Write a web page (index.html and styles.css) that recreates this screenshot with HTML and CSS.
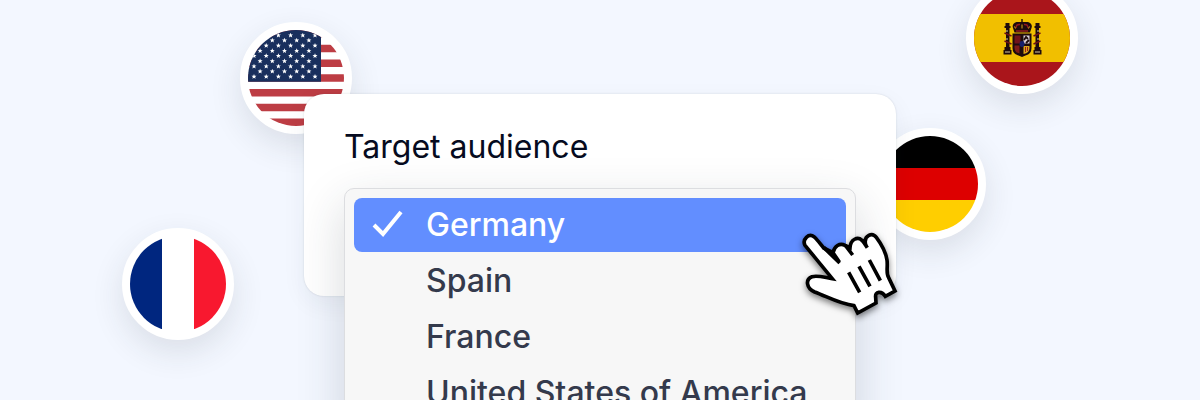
FILE: index.html
```
<!DOCTYPE html>
<html lang="en">
	<head>
		<meta charset="utf-8">
		<meta name="viewport" content="width=device-width, initial-scale=1.0">
		<title>Target audience</title>
		<link rel="stylesheet" href="styles.css">
	</head>
	<body>
		<main class="stage">
			<svg class="flag flag-us" viewBox="0 0 96 96" role="img" aria-label="United States of America">
				<defs>
					<path id="star" fill="#fff" d="M0-2.500 .7-.8 2.500-.7 1.100 .4 1.600 2.200 0 1.200-1.600 2.200-1.100 .4-2.500-.7-.7-.8Z"/>
					<g id="star-row">
						<use href="#star" x="6"/>
						<use href="#star" x="18.2"/>
						<use href="#star" x="30.4"/>
						<use href="#star" x="42.600"/>
						<use href="#star" x="54.800"/>
						<use href="#star" x="67"/>
					</g>
					<g id="star-row-short">
						<use href="#star" x="12.100"/>
						<use href="#star" x="24.300"/>
						<use href="#star" x="36.500"/>
						<use href="#star" x="48.700"/>
						<use href="#star" x="60.900"/>
					</g>
				</defs>
				<path fill="#fff" d="M0 0h96v96H0z"/>
				<path stroke="#bd3d44" stroke-width="7.4" d="M0 3.7h96M0 18.5h96M0 33.2h96M0 48h96M0 62.8h96M0 77.5h96M0 92.3h96"/>
				<path fill="#192f5d" d="M0 0h73v51.7H0z"/>
				<use href="#star-row" y="5.200"/>
				<use href="#star-row-short" y="10.300"/>
				<use href="#star-row" y="15.500"/>
				<use href="#star-row-short" y="20.700"/>
				<use href="#star-row" y="25.800"/>
				<use href="#star-row-short" y="31"/>
				<use href="#star-row" y="36.200"/>
				<use href="#star-row-short" y="41.300"/>
				<use href="#star-row" y="46.500"/>
			</svg>
			<svg class="flag flag-es" viewBox="0 0 96 96" role="img" aria-label="Spain">
				<path fill="#aa151b" d="M0 0h96v96H0z"/>
				<path fill="#f1bf00" d="M0 24h96v48H0z"/>
				<!-- pillars -->
				<path fill="#1d0b0c" d="M31.500 33h4v3h-4zM30.500 36h6v2h-6zM32 38h3.500v21H32zM30.500 57h6v3h-6zM29.500 60h8v4.500h-8zM61.500 33h4v3h-4zM60.500 36h6v2h-6zM61.500 38H65v21h-3.500zM60.500 57h6v3h-6zM59.500 60h8v4.500h-8z"/>
				<path fill="none" stroke="#6d1216" stroke-width="1.6" d="M30.500 43l7 3M30.500 51l7 3M66.500 43l-7 3M66.500 51l-7 3"/>
				<path stroke="#d9c9a0" d="M33 40v2M33 48v2M64 40v2M64 48v2M31 62h5M61 62h5"/>
				<!-- crown -->
				<path fill="#1d0b0c" d="M47.300 29h1.400v3l5.300 0q5 2 3.500 6l-1.500 4.500H40.500L39 38q-1.500-4 3.500-6l4.800 0z"/>
				<path fill="none" stroke="#8e1a1e" stroke-width="1.500" d="M42 38q0-4 4-3.500M54 38q0-4-4-3.500M42 41h12"/>
				<path fill="none" stroke="#d8a818" d="M40.500 36.500l1 2M55.500 36.500l-1 2M48 34.500v4"/>
				<!-- shield -->
				<path fill="#1d0b0c" d="M38.500 43.500h19V58q0 6-6 7.500L48 67l-3.500-1.500q-6-1.500-6-7.500z"/>
				<path fill="#6e121a" d="M40.500 45.500h6v8h-6z"/>
				<path fill="#d8cfda" d="M49.500 45.500h6v8h-6z"/>
				<path fill="none" stroke="#1d0b0c" stroke-width="1.800" d="M50 50l2-3 2 2M52 53l3-3"/>
				<path fill="#7c1a18" d="M40.500 55.500h5v8q-5-1-5-6z"/>
				<path fill="#dca51b" d="M49.500 56h6v2q0 5-6 6z"/>
				<path fill="none" stroke="#9a1f1d" d="M51.500 57v5M53.500 57v4"/>
				<ellipse cx="48" cy="54" rx="2.500" ry="3" fill="#17206b"/>
			</svg>
			<svg class="flag flag-de" viewBox="0 0 96 96" role="img" aria-label="Germany">
				<path d="M0 0h96v32H0z"/>
				<path fill="#d00" d="M0 32h96v32H0z"/>
				<path fill="#ffce00" d="M0 64h96v32H0z"/>
			</svg>
			<svg class="flag flag-fr" viewBox="0 0 96 96" role="img" aria-label="France">
				<path fill="#00267f" d="M0 0h32v96H0z"/>
				<path fill="#fff" d="M32 0h32v96H32z"/>
				<path fill="#f8182f" d="M64 0h32v96H64z"/>
			</svg>

			<form class="card">
				<label class="title" for="audience">Target audience</label>
				<div class="field">
					<select class="menu" id="audience" name="audience" size="4">
						<option selected>Germany</option>
						<option>Spain</option>
						<option>France</option>
						<option>United States of America</option>
					</select>
					<svg class="check" viewBox="0 0 32 28" aria-hidden="true">
						<path d="M2 15l9 9L29 2"/>
					</svg>
					<svg class="hand" viewBox="0 0 360 330" aria-hidden="true">
						<path class="hand-shape" d="M45 76C36 58 56 38 73 51C83 60 92 73 101 84L129 98C133 78 149 68 165 76Q171 79 180 83C182 57 203 49 216 61L226 69C223 47 246 35 259 52Q286 88 291 120C294 142 287 158 296 173L315 213L286 229C275 211 254 214 257 232L258 249L203 279L192 257C150 252 112 230 74 216C49 205 45 178 66 170C84 165 106 173 127 176Z"/>
						<path class="hand-lines" d="M101 82L149 129M129 98L148 126M165 75L188 105M216 59L232 83M176 157L209 217M207 139L240 199M238 120L271 182"/>
					</svg>
				</div>
			</form>
		</main>
	</body>
</html>
```
FILE: styles.css
```
body {
	margin: 0;
	background: #f3f7ff;
	font-family: Inter, sans-serif;
	font-size: 32px;
	line-height: 40px;
}

.stage {
	position: relative;
	display: flex;
	justify-content: center;
	align-items: flex-start;
	height: 100vh;
	padding-top: 94px;
	box-sizing: border-box;
	overflow: hidden;
}

/* flags float around the card */
.flag {
	position: absolute;
	width: 96px;
	height: 96px;
	border: 8px solid #fff;
	border-radius: 50%;
	background: #fff;
	box-shadow: 0 12px 32px rgba(40, 50, 60, 0.12);
}

.flag-us {
	top: 22px;
	left: calc(50% - 360px);
}

.flag-es {
	top: -18px;
	left: calc(50% + 366px);
}

.flag-de {
	top: 128px;
	left: calc(50% + 274px);
}

.flag-fr {
	top: 228px;
	left: calc(50% - 478px);
}

.card {
	position: relative;
	width: 100%;
	max-width: 592px;
	padding: 33px 40px 28px;
	box-sizing: border-box;
	border-radius: 20px;
	background: #fff;
	box-shadow: 0 0 2px rgba(40, 50, 60, 0.16), 0 8px 24px rgba(40, 50, 60, 0.06);
}

.title {
	display: block;
	margin-bottom: 21px;
	color: #060b20;
}

.field {
	position: relative;
	height: 80px;
}

/* the open list hangs out of the card */
.menu {
	position: absolute;
	top: 0;
	left: 0;
	width: 100%;
	height: 248px;
	padding: 9px;
	box-sizing: border-box;
	overflow: hidden;
	border: 1px solid #dcdde0;
	border-radius: 10px;
	outline: none;
	background: #f7f7f7;
	color: #343a4c;
	font: inherit;
	box-shadow: 0 16px 48px rgba(40, 50, 60, 0.18);
}

.menu option {
	height: 54px;
	margin-bottom: 2px;
	padding: 7px 0 7px 72px;
	box-sizing: border-box;
	border-radius: 8px;
	font-weight: 500;
}

.menu option:checked {
	background: linear-gradient(#628eff, #628eff);
	color: #fff;
	-webkit-text-fill-color: #fff;
}

.check {
	position: absolute;
	top: 22px;
	left: 28px;
	width: 32px;
	height: 28px;
	fill: none;
	stroke: #fff;
	stroke-width: 4;
	pointer-events: none;
}

.hand {
	position: absolute;
	top: 32px;
	right: -54px;
	width: 120px;
	height: 110px;
	fill: none;
	stroke: #000;
	stroke-width: 11;
	pointer-events: none;
	filter: drop-shadow(0 3px 3px rgba(0, 0, 0, 0.5));
}

.hand-shape {
	fill: #fff;
}
```
